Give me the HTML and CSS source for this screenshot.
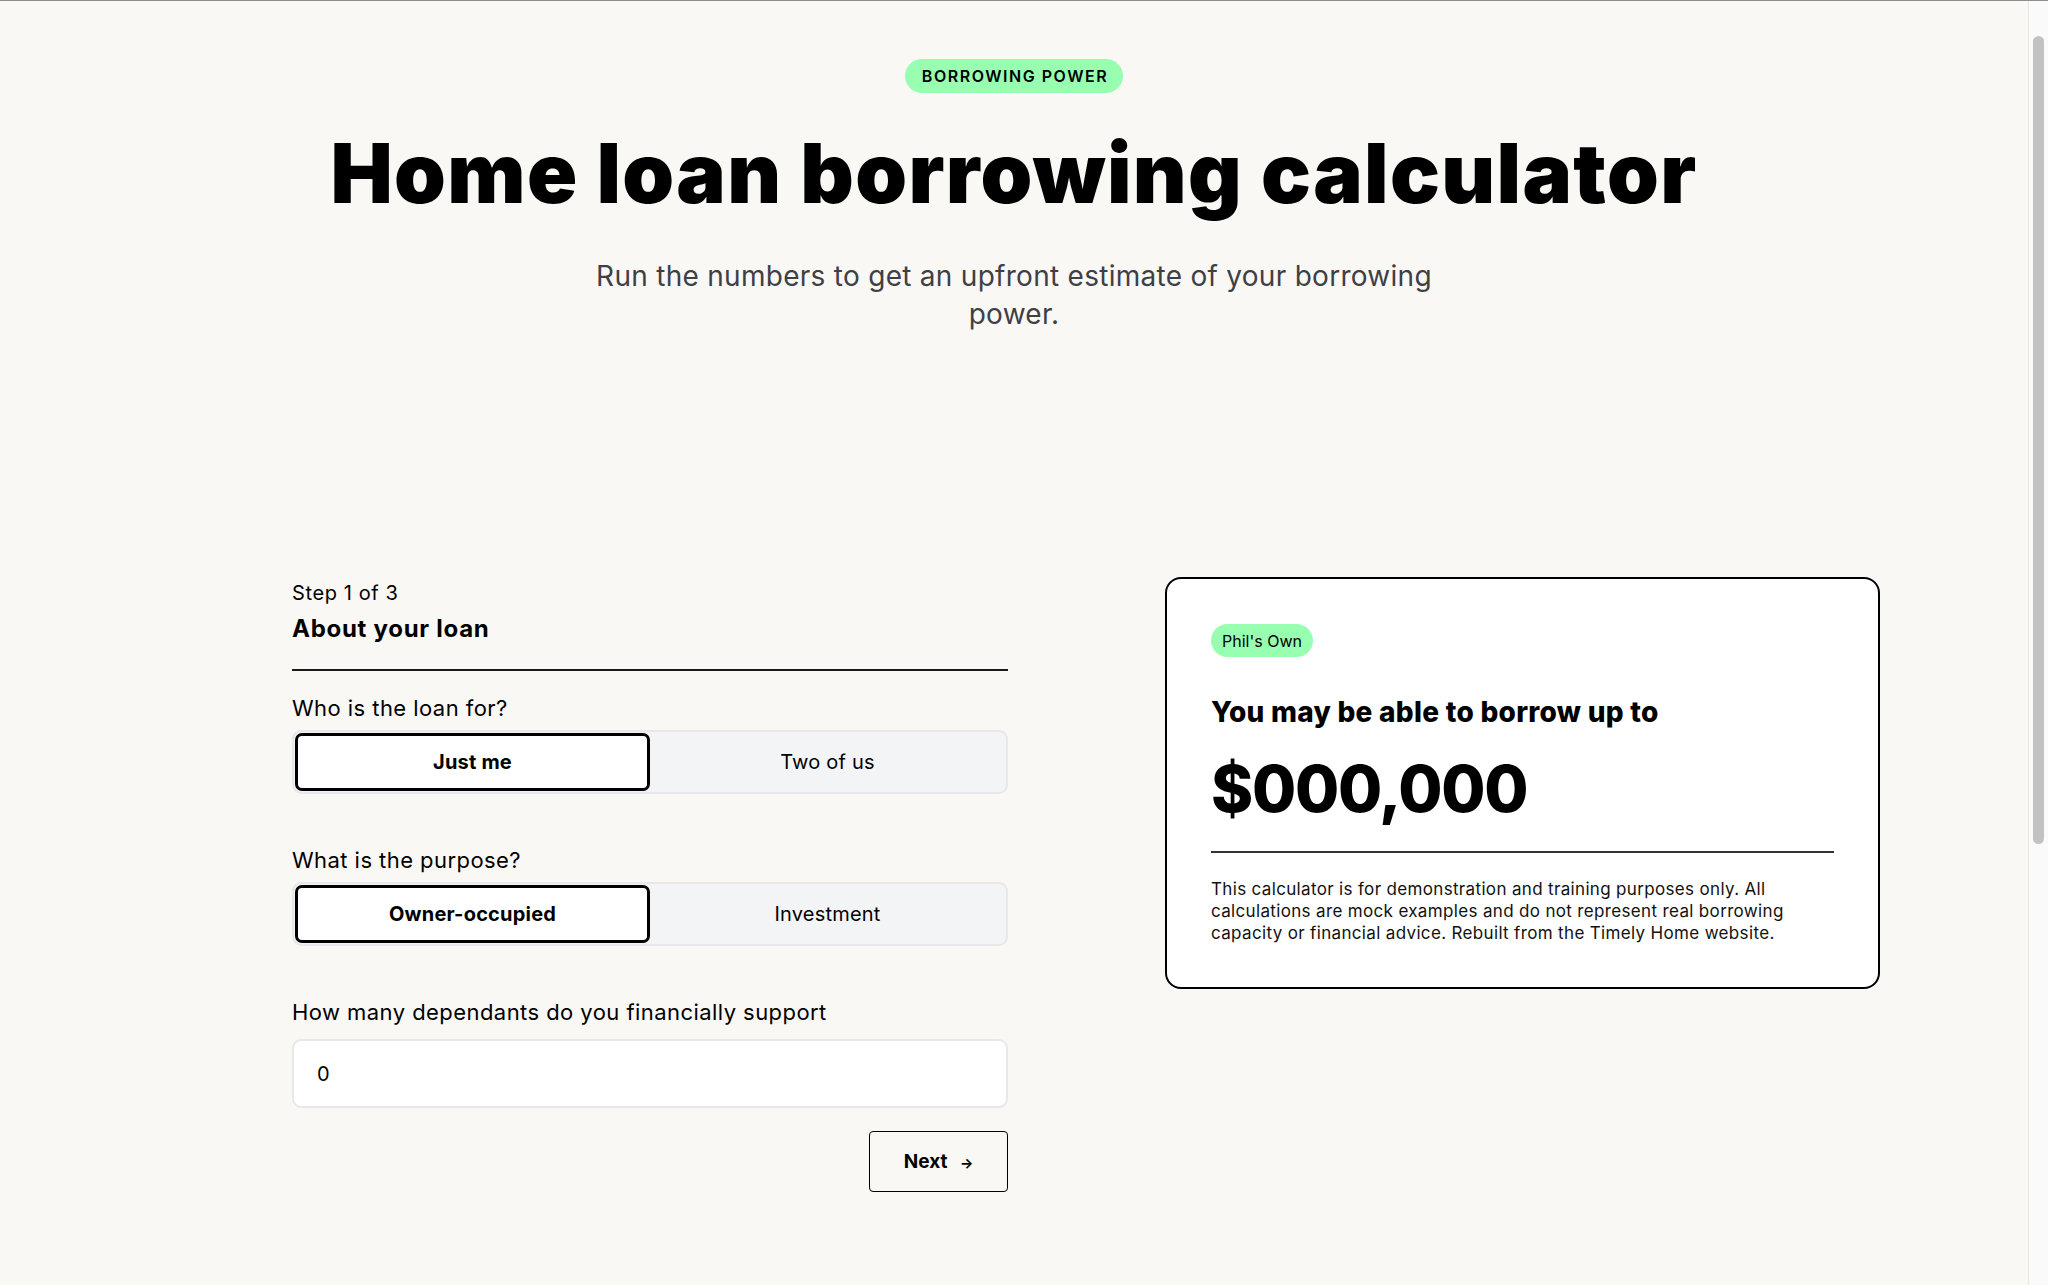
FILE: index.html
```html
<!DOCTYPE html>
<html lang="en">
<head>
    <meta charset="UTF-8">
    <meta name="viewport" content="width=device-width, initial-scale=1.0">
    <title>Home loan borrowing calculator</title>
    <link rel="stylesheet" href="styles.css">
</head>
<body>
    <main class="page">
        <!-- Intro -->
        <section class="hero">
            <span class="eyebrow">Borrowing power</span>
            <h1 class="hero-title">Home loan borrowing calculator</h1>
            <p class="hero-lead">Run the numbers to get an upfront estimate of your borrowing power.</p>
        </section>

        <!-- Calculator: form steps on the left, result on the right -->
        <section class="calculator">
            <form class="steps">
                <div class="step-head">
                    <p class="step-count">Step 1 of 3</p>
                    <h2 class="step-title">About your loan</h2>
                </div>

                <div class="field">
                    <p class="field-label">Who is the loan for?</p>
                    <div class="toggle">
                        <button type="button" class="toggle-option is-active">Just me</button>
                        <button type="button" class="toggle-option">Two of us</button>
                    </div>
                </div>

                <div class="field">
                    <p class="field-label">What is the purpose?</p>
                    <div class="toggle">
                        <button type="button" class="toggle-option is-active">Owner-occupied</button>
                        <button type="button" class="toggle-option">Investment</button>
                    </div>
                </div>

                <div class="field">
                    <label class="field-label" for="dependants">How many dependants do you financially support</label>
                    <input id="dependants" class="text-input" type="text" value="0">
                </div>

                <div class="actions">
                    <button type="button" class="next-btn">Next <span class="arrow">&rarr;</span></button>
                </div>
            </form>

            <aside class="result-card">
                <span class="tag">Phil's Own</span>
                <h3 class="result-title">You may be able to borrow up to</h3>
                <p class="result-amount">$000,000</p>
                <p class="disclaimer">This calculator is for demonstration and training purposes only. All calculations are mock examples and do not represent real borrowing capacity or financial advice. Rebuilt from the Timely Home website.</p>
            </aside>
        </section>
    </main>

    <!-- window scrollbar -->
    <div class="scrollbar" aria-hidden="true"><div class="scrollbar-thumb"></div></div>
</body>
</html>
```

FILE: styles.css
```css
html {
    border-top: 1px solid #8e8e8e;
}
body {
    font-family: 'Inter', 'Noto Sans', sans-serif;
    background-color: #f9f8f5;
    color: #000;
    margin: 0;
    padding: 0 20px 0 0;
}
.page {
    padding: 58px 0 848px;
}

/* Intro */
.hero {
    display: flex;
    flex-direction: column;
    align-items: center;
    text-align: center;
}
.eyebrow {
    display: inline-flex;
    align-items: center;
    height: 34px;
    padding: 0 15px 0 17px;
    border-radius: 17px;
    background-color: #98ffb0;
    font-size: 16px;
    font-weight: 600;
    letter-spacing: 0.095em;
    text-transform: uppercase;
}
.hero-title {
    margin: 36px 0 0;
    font-size: 83px;
    line-height: 89px;
    font-weight: 900;
    letter-spacing: 0.016em;
}
.hero-lead {
    max-width: 880px;
    margin: 39px 0 0;
    font-size: 28px;
    line-height: 38px;
    letter-spacing: 0.01em;
    color: #3f3f46;
}

/* Calculator */
.calculator {
    display: grid;
    grid-template-columns: 716px 715px;
    column-gap: 157px;
    align-items: start;
    margin: 244px 0 0 calc(50% - 722px);
}
.step-head {
    padding-bottom: 25px;
    border-bottom: 2px solid #1a1a1a;
}
.step-count {
    margin: 2px 0 0;
    font-size: 20px;
    line-height: 28px;
    letter-spacing: 0.03em;
}
.step-title {
    margin: 7px 0 0;
    font-size: 24px;
    line-height: 30px;
    font-weight: 700;
    letter-spacing: 0.03em;
}
.field {
    display: flex;
    flex-direction: column;
    margin-top: 51px;
}
.step-head + .field {
    margin-top: 22px;
}
.field-label {
    margin: 0 0 7px;
    font-size: 22px;
    line-height: 30px;
    letter-spacing: 0.02em;
}
.toggle {
    display: grid;
    grid-template-columns: 1fr 1fr;
    padding: 1px;
    border: 2px solid #e8e8ea;
    border-radius: 9px;
    background-color: #f3f4f6;
}
.toggle-option {
    height: 58px;
    border: 2px solid transparent;
    border-radius: 7px;
    background: none;
    font-family: inherit;
    font-size: 20px;
    letter-spacing: 0.01em;
    color: #000;
    cursor: pointer;
}
.toggle-option.is-active {
    border: 3px solid #000;
    background-color: #fff;
    font-weight: 700;
}
.text-input {
    height: 69px;
    margin-top: 5px;
    padding: 0 23px;
    box-sizing: border-box;
    border: 2px solid #e8e8ea;
    border-radius: 9px;
    background-color: #fff;
    font-family: inherit;
    font-size: 20px;
    color: #000;
}
.actions {
    display: flex;
    justify-content: flex-end;
    margin-top: 23px;
}
.next-btn {
    width: 139px;
    height: 61px;
    border: 1.5px solid #000;
    border-radius: 4px;
    background: none;
    font-family: inherit;
    font-size: 19px;
    font-weight: 700;
    color: #000;
    cursor: pointer;
}
.next-btn .arrow {
    margin-left: 8px;
    font-size: 14px;
}

/* Result card */
.result-card {
    display: flex;
    flex-direction: column;
    align-items: flex-start;
    padding: 45px 44px 43px;
    border: 2px solid #000;
    border-radius: 16px;
    background-color: #fff;
}
.tag {
    display: inline-flex;
    align-items: center;
    height: 33px;
    padding: 0 11px;
    border-radius: 17px;
    background-color: #98ffb0;
    font-size: 16px;
}
.result-title {
    margin: 38px 0 0;
    font-size: 28px;
    line-height: 34px;
    font-weight: 800;
    letter-spacing: 0.01em;
}
.result-amount {
    align-self: stretch;
    margin: 25px 0 0;
    padding-bottom: 27px;
    border-bottom: 2px solid #333;
    font-size: 64px;
    line-height: 70px;
    font-weight: 800;
    letter-spacing: -0.02em;
}
.disclaimer {
    margin: 25px 0 0;
    font-size: 17px;
    line-height: 22px;
    letter-spacing: 0.02em;
    color: #111;
}

/* Window scrollbar */
.scrollbar {
    position: fixed;
    top: 1px;
    right: 0;
    bottom: 0;
    width: 19px;
    border-left: 1px solid #e6e6e6;
    background-color: #fafafa;
}
.scrollbar-thumb {
    position: absolute;
    top: 35px;
    left: 4px;
    width: 11px;
    height: 808px;
    border-radius: 6px;
    background-color: #c2c2c2;
}
```
